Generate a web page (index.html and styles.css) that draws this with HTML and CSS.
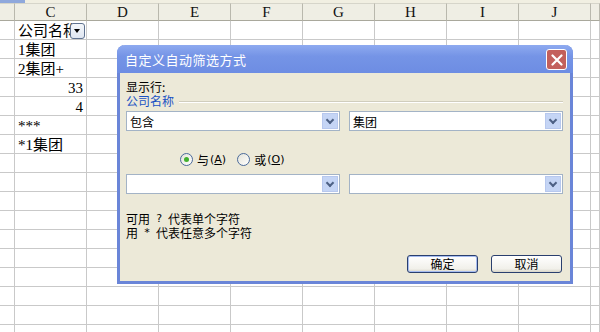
FILE: index.html
```html
<!DOCTYPE html>
<html lang="zh-CN">
<head>
    <meta charset="UTF-8">
    <title>自定义自动筛选方式</title>
    <link rel="stylesheet" href="styles.css">
</head>
<body>
    <div class="topstrip"><span class="sel"></span></div>

    <!-- worksheet grid -->
    <div class="sheet" id="sheet"></div>

    <!-- autofilter dialog -->
    <div class="dialog">
        <div class="titlebar">
            <span class="title">自定义自动筛选方式</span>
            <span class="close">
                <svg width="12" height="12" viewBox="0 0 12 12"><path d="M1.5 1.5 L10.5 10.5 M10.5 1.5 L1.5 10.5" stroke="#fff" stroke-width="2.2" stroke-linecap="round"/></svg>
            </span>
        </div>
        <div class="body">
            <div class="label">显示行:</div>
            <div class="legend"><span>公司名称</span><i class="groove"></i></div>

            <div class="combos">
                <div class="combo"><span>包含</span><b class="arrow"></b></div>
                <div class="combo"><span>集团</span><b class="arrow"></b></div>
            </div>

            <div class="radios">
                <label class="radio"><i class="dot on"></i>与<span class="key">(<u>A</u>)</span></label>
                <label class="radio"><i class="dot"></i>或<span class="key">(<u>O</u>)</span></label>
            </div>

            <div class="combos">
                <div class="combo"><span></span><b class="arrow"></b></div>
                <div class="combo"><span></span><b class="arrow"></b></div>
            </div>

            <div class="hint">
                <div>可用<span class="wild">?</span>代表单个字符</div>
                <div>用<span class="wild">*</span>代表任意多个字符</div>
            </div>

            <div class="buttons">
                <button class="default">确定</button>
                <button>取消</button>
            </div>
        </div>
    </div>

    <script src="sheet.js"></script>
</body>
</html>
```

FILE: sheet.js
```js
// build the visible part of the worksheet
const sheet = document.getElementById("sheet");
const cols = ["", "C", "D", "E", "F", "G", "H", "I", "J", ""];
const data = {
    1: { C: "公司名称", filter: true },
    2: { C: "1集团" },
    3: { C: "2集团+" },
    4: { C: "33", num: true },
    5: { C: "4", num: true },
    6: { C: "***" },
    7: { C: "*1集团" }
};

cols.forEach(c => {
    sheet.innerHTML += `<div class="colhead">${c}</div>`;
});

for (let r = 1; r <= 17; r++) {
    cols.forEach((c, i) => {
        let cls = "cell";
        let text = "";
        if (data[r] && c === "C" && i === 1) {
            text = data[r].C;
            if (data[r].num) cls += " num";
            if (data[r].filter) {
                text = `<span class="clip">${text}</span><span class="filterbtn"></span>`;
                cls += " hasfilter";
            }
        }
        sheet.innerHTML += `<div class="${cls}">${text}</div>`;
    });
}
```

FILE: styles.css
```css
body {
    margin: 0;
    width: 600px;
    height: 332px;
    overflow: hidden;
    background: #fff;
    position: relative;
    font-family: "Noto Sans CJK SC", sans-serif;
}

.topstrip {
    height: 3px;
    background: #f1efe2;
}

.topstrip .sel {
    display: block;
    width: 25px;
    height: 3px;
    background: #8fa8dc;
}

/* worksheet */
.sheet {
    display: grid;
    grid-template-columns: 15px repeat(8, 72px) 9px;
    grid-template-rows: 18px;
    grid-auto-rows: 19px;
}

.colhead {
    box-sizing: border-box;
    background: #efeee4;
    border-right: 1px solid #b9b8ad;
    border-bottom: 1px solid #a9a89c;
    border-top: 1px solid #d6d5ca;
    font-family: "Liberation Serif", serif;
    font-size: 15px;
    line-height: 17px;
    text-align: center;
    color: #111;
}

.cell {
    box-sizing: border-box;
    border-right: 1px solid #c9c9c9;
    border-bottom: 1px solid #c9c9c9;
    font-family: "Liberation Serif", "Noto Sans CJK SC", serif;
    font-size: 15px;
    line-height: 18px;
    padding: 1px 0 0 3px;
    color: #000;
    white-space: nowrap;
    overflow: hidden;
}

.cell.num {
    text-align: right;
    padding-right: 3px;
}

.cell.hasfilter {
    position: relative;
}

.clip {
    display: block;
    width: 55px;
    overflow: hidden;
}

.filterbtn {
    position: absolute;
    right: 1px;
    top: 2px;
    width: 13px;
    height: 14px;
    border: 1px solid #5f7290;
    border-radius: 3px;
    background: linear-gradient(#f4f7fb, #dfe6f1);
}

.filterbtn::after {
    content: "";
    position: absolute;
    left: 3px;
    top: 5px;
    border-left: 3.5px solid transparent;
    border-right: 3.5px solid transparent;
    border-top: 4px solid #000;
}

/* dialog */
.dialog {
    position: absolute;
    left: 117px;
    top: 45px;
    width: 456px;
    height: 239px;
    box-sizing: border-box;
    background: #ece9d8;
    border: 3px solid #6a85d8;
    border-top: 0;
    border-radius: 8px 8px 0 0;
    display: flex;
    flex-direction: column;
    font-size: 12px;
    color: #000;
}

.titlebar {
    height: 28px;
    margin: 0 -3px;
    border-radius: 8px 8px 0 0;
    background: linear-gradient(#8eaaf0, #7594e6 40%, #6d8de3);
    display: flex;
    align-items: center;
    justify-content: space-between;
    padding: 0 6px 0 8px;
}

.title {
    color: #fff;
    font-size: 13px;
    letter-spacing: 0.5px;
}

.close {
    width: 19px;
    height: 19px;
    border: 1px solid #fff;
    border-radius: 3px;
    background: #c3605c;
    display: flex;
    align-items: center;
    justify-content: center;
    margin-top: 1px;
}

.body {
    flex: 1;
    padding: 7px 7px 0 6px;
    display: flex;
    flex-direction: column;
}

.label {
    height: 14px;
    line-height: 14px;
}

.legend {
    display: flex;
    align-items: center;
    gap: 5px;
    height: 14px;
    line-height: 14px;
    color: #1a52c4;
}

.groove {
    flex: 1;
    height: 0;
    border-top: 1px solid #d0cdbd;
    border-bottom: 1px solid #fff;
    margin-top: 2px;
}

.combos {
    display: flex;
    gap: 9px;
    margin-top: 3px;
}

.combo {
    flex: 1;
    height: 20px;
    box-sizing: border-box;
    border: 1px solid #a3b3c6;
    background: #fff;
    display: flex;
    align-items: center;
    justify-content: space-between;
    padding: 0 1px 0 3px;
}

.arrow {
    width: 16px;
    height: 16px;
    box-sizing: border-box;
    background: #c5d5f5;
    border: 1px solid #b7c8ee;
    position: relative;
}

.arrow::after {
    content: "";
    position: absolute;
    left: 4px;
    top: 3px;
    width: 4px;
    height: 4px;
    border-right: 2px solid #4d6185;
    border-bottom: 2px solid #4d6185;
    transform: rotate(45deg);
}

.radios {
    display: flex;
    gap: 11px;
    padding-left: 54px;
    margin-top: 21px;
    height: 14px;
    align-items: center;
}

.radio {
    display: flex;
    align-items: center;
    gap: 4px;
}

.key {
    font-family: "DejaVu Sans", sans-serif;
    font-size: 11px;
    margin-left: -3px;
}

.dot {
    width: 11px;
    height: 11px;
    border: 1px solid #4a6a9a;
    border-radius: 50%;
    background: linear-gradient(135deg, #e4e3d8, #fff);
    position: relative;
}

.dot.on::after {
    content: "";
    position: absolute;
    left: 3px;
    top: 3px;
    width: 5px;
    height: 5px;
    border-radius: 50%;
    background: #42b02e;
}

.combos + .combos,
.radios + .combos {
    margin-top: 8px;
}

.hint {
    margin-top: 18px;
    line-height: 14px;
}

.hint div {
    height: 14px;
}

.wild {
    display: inline-block;
    width: 18px;
    line-height: 14px;
    vertical-align: top;
    text-align: center;
    font-family: "DejaVu Sans Mono", monospace;
    font-size: 11px;
}

.buttons {
    display: flex;
    justify-content: flex-end;
    gap: 13px;
    margin-top: 15px;
    padding-right: 1px;
}

button {
    width: 71px;
    height: 18px;
    padding: 0;
    font-family: "Noto Sans CJK SC", sans-serif;
    font-size: 12px;
    line-height: 16px;
    color: #000;
    background: linear-gradient(#fff, #f1f0ea 80%, #d8d5c8);
    border: 1px solid #2a3f6e;
    border-radius: 3px;
}

button.default {
    box-shadow: inset 0 0 0 1px #a6bcf0;
}
```
